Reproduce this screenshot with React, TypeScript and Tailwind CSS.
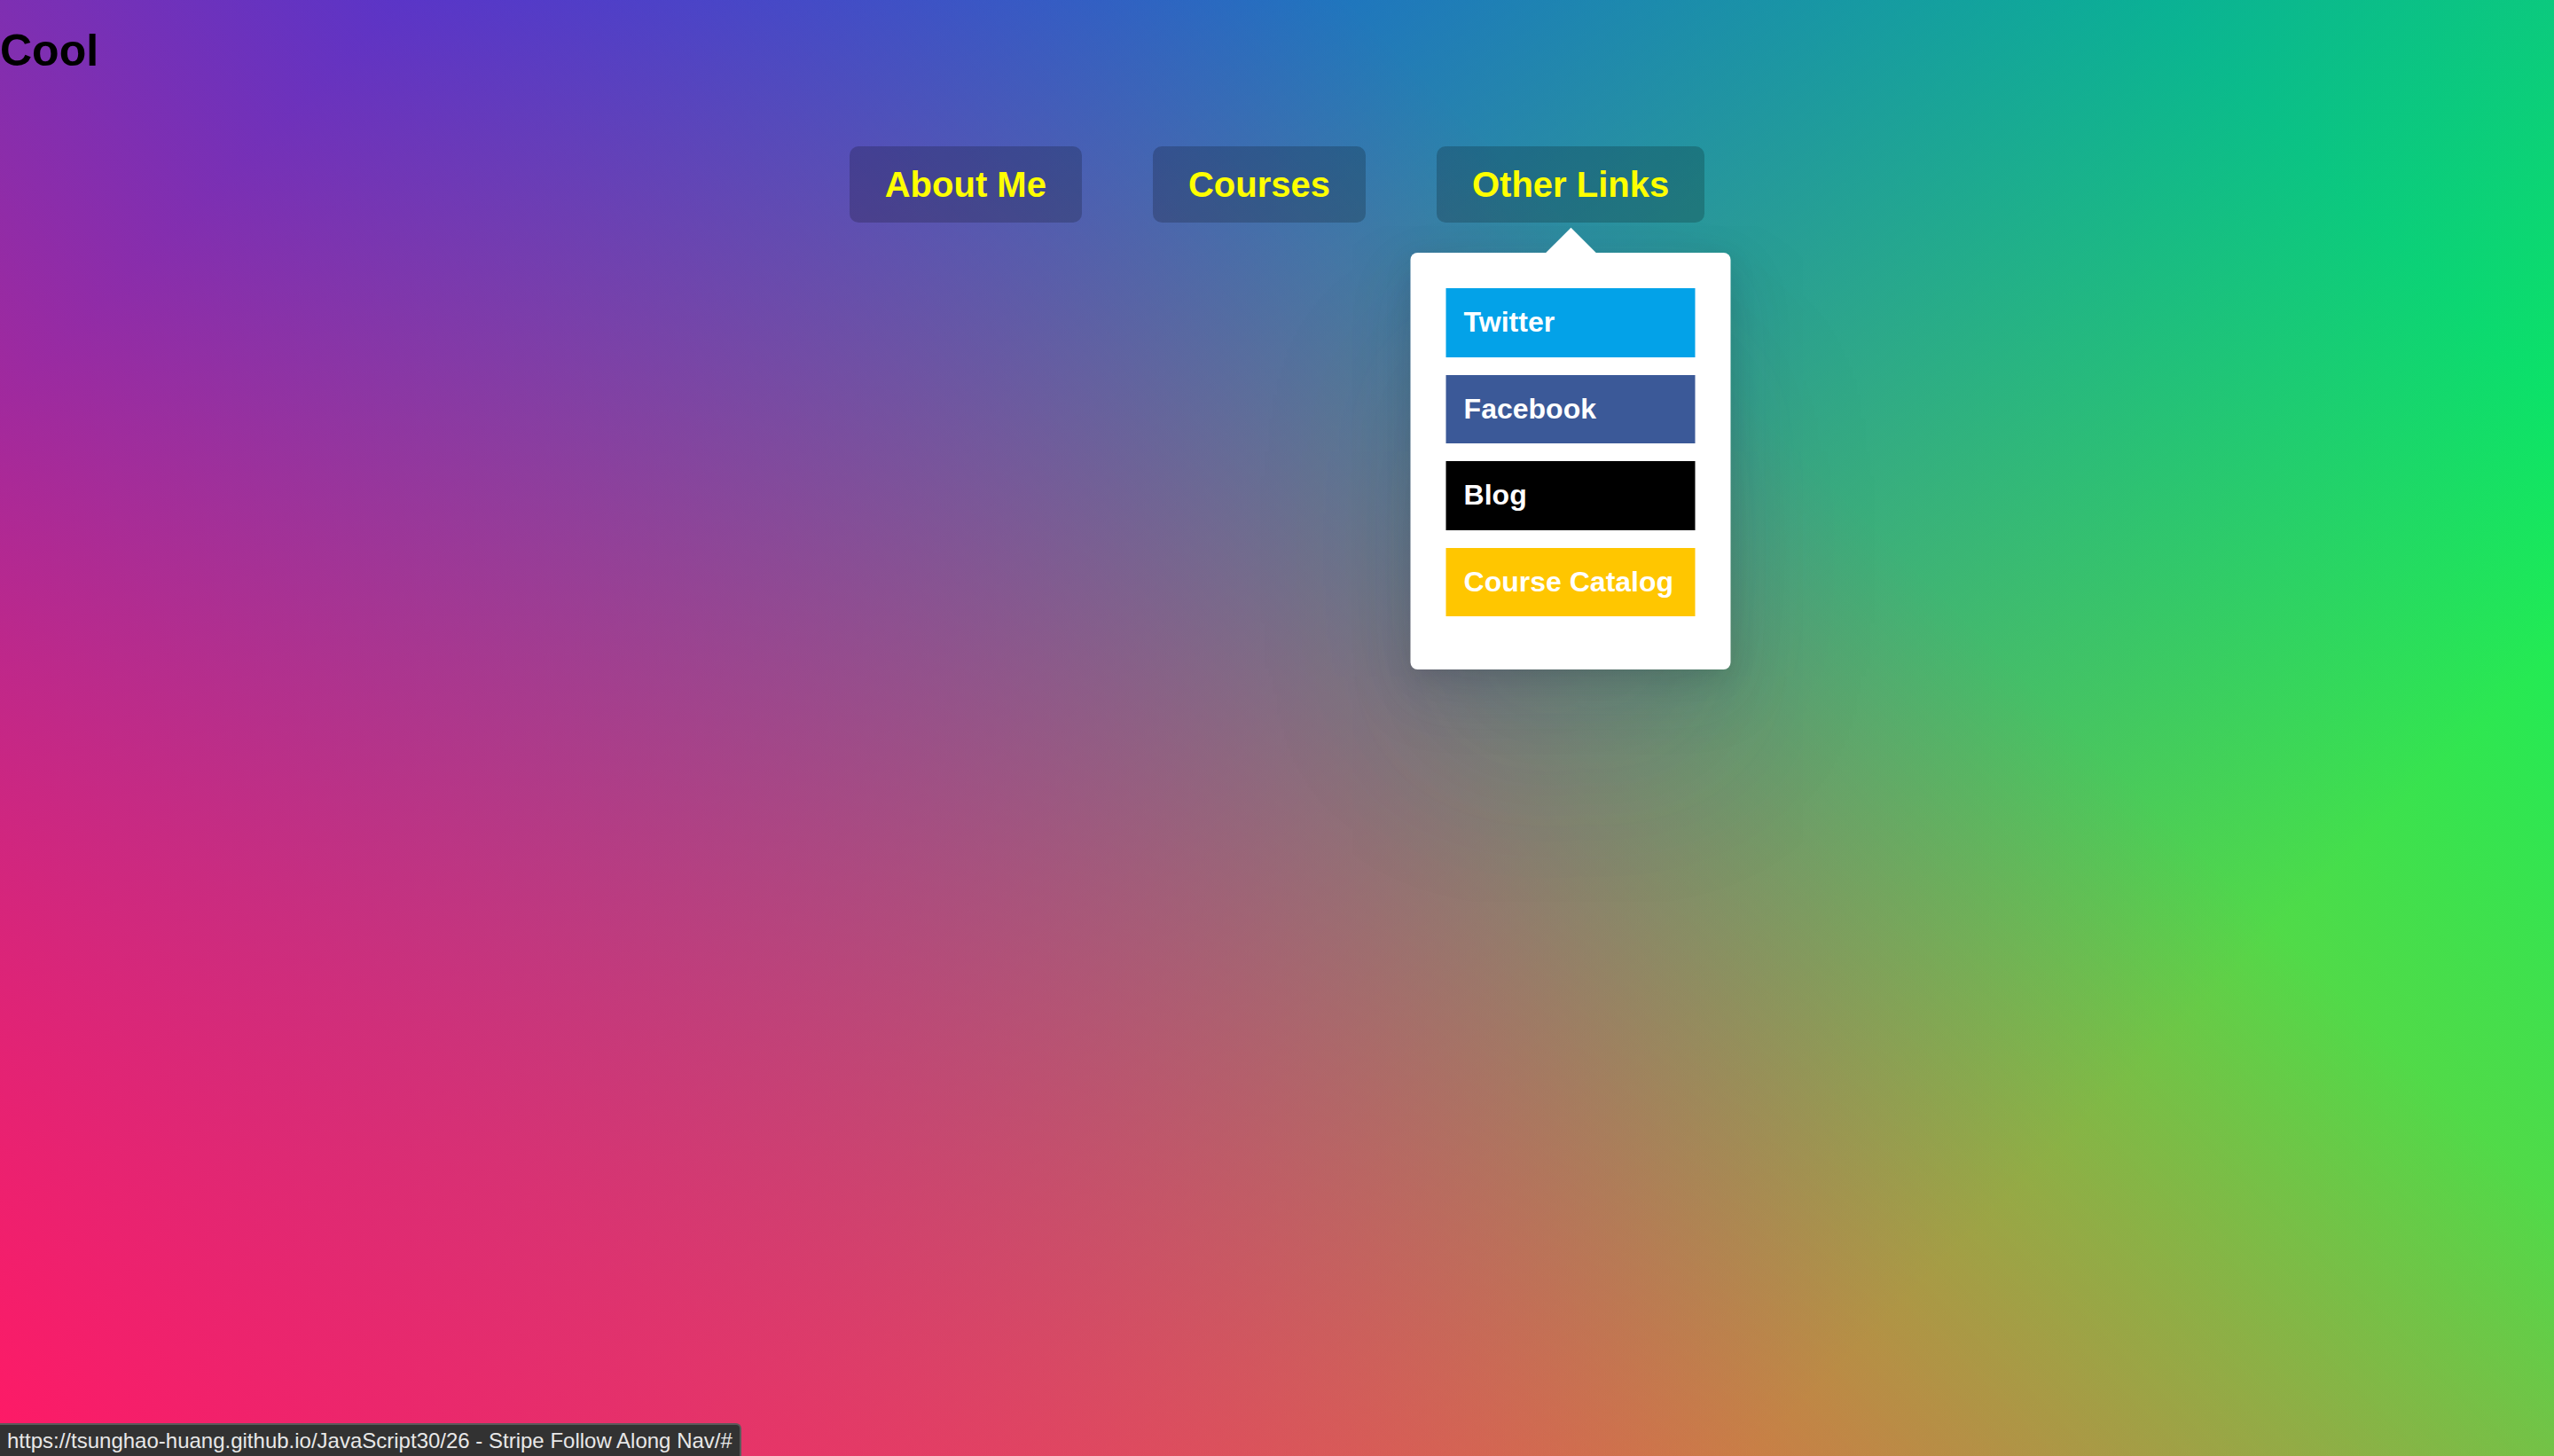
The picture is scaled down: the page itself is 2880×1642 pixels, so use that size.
import React from 'react';

const links = [
  { label: 'Twitter', bg: 'bg-[#03a2e8]' },
  { label: 'Facebook', bg: 'bg-[#3b5998]' },
  { label: 'Blog', bg: 'bg-black' },
  { label: 'Course Catalog', bg: 'bg-[#ffc600]' },
];

function NavItem({ label, open }: { label: string; open?: boolean }) {
  return (
    <li className="relative flex justify-center">
      <a
        href="#"
        className="m-[40px] inline-block rounded-[10px] bg-black/20 px-[40px] py-[20px] text-[40px] leading-[46px] font-bold text-[#ffff00] no-underline"
      >
        {label}
      </a>
      {open && (
        <div className="absolute top-[160px] left-1/2 z-10 -translate-x-1/2 rounded-[8px] bg-white p-[40px] shadow-[0_100px_200px_rgba(50,50,93,0.1),0_30px_70px_rgba(50,50,93,0.15),0_10px_30px_rgba(0,0,0,0.1)]">
          <span className="absolute top-0 left-1/2 block h-[40px] w-[40px] -translate-x-1/2 -translate-y-1/2 rotate-45 bg-white" />
          <ul className="relative flex w-[281px] flex-col">
            {links.map(l => (
              <li key={l.label}>
                <a
                  href="#"
                  className={`mb-[20px] block whitespace-nowrap px-[20px] py-[20px] text-[32px] leading-[37.5px] font-bold text-white ${l.bg}`}
                >
                  {l.label}
                </a>
              </li>
            ))}
          </ul>
        </div>
      )}
    </li>
  );
}

export default function App() {
  return (
    <div className="relative min-h-screen w-full overflow-hidden font-['Liberation_Sans',Arial,sans-serif] [background-image:linear-gradient(45deg,hsla(340,100%,55%,1)_0%,hsla(340,100%,55%,0)_70%),linear-gradient(135deg,hsla(225,95%,50%,1)_10%,hsla(225,95%,50%,0)_80%),linear-gradient(225deg,hsla(140,90%,50%,1)_10%,hsla(140,90%,50%,0)_80%),linear-gradient(315deg,hsla(35,95%,55%,1)_100%,hsla(35,95%,55%,0)_70%)]">
      <h2 className="mt-[30px] mb-[40px] text-[50px] leading-[55px] font-bold text-black">Cool</h2>
      <nav className="relative">
        <ul className="flex justify-center">
          <NavItem label="About Me" />
          <NavItem label="Courses" />
          <NavItem label="Other Links" open />
        </ul>
      </nav>

      <div className="absolute bottom-0 left-0 flex h-[37px] items-center rounded-tr-[6px] border-t-2 border-r-2 border-[#5a5a5a] bg-[#323232] pr-[8px] pl-[8px] text-[24px] text-[#e8e8e8]">
        https://tsunghao-huang.github.io/JavaScript30/26 - Stripe Follow Along Nav/#
      </div>
    </div>
  );
}
